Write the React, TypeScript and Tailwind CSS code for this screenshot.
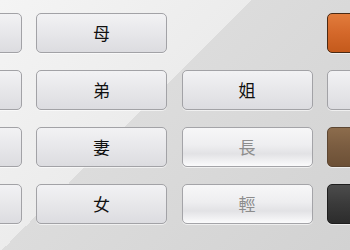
import React from 'react';

type Cell =
  | { kind: 'plain'; label?: string }
  | { kind: 'gloss'; label: string }
  | { kind: 'swatch'; tone: 'orange' | 'brown' | 'dark' }
  | { kind: 'empty' };

const rows: Cell[][] = [
  [{ kind: 'plain' }, { kind: 'plain', label: '母' }, { kind: 'empty' }, { kind: 'swatch', tone: 'orange' }],
  [{ kind: 'plain' }, { kind: 'plain', label: '弟' }, { kind: 'plain', label: '姐' }, { kind: 'plain' }],
  [{ kind: 'plain' }, { kind: 'plain', label: '妻' }, { kind: 'gloss', label: '長' }, { kind: 'swatch', tone: 'brown' }],
  [{ kind: 'plain' }, { kind: 'plain', label: '女' }, { kind: 'gloss', label: '輕' }, { kind: 'swatch', tone: 'dark' }],
];

const swatchClass = {
  orange:
    'border-[#4a2a14] bg-[linear-gradient(180deg,#e27c3c_0%,#d4682a_50%,#c45a1c_100%)]',
  brown:
    'border-[#5c4632] bg-[linear-gradient(180deg,#8c6c4c_0%,#7a5c40_50%,#6c5036_100%)]',
  dark: 'border-[#1e1e1e] bg-[linear-gradient(180deg,#4c4c4c_0%,#3a3a3a_50%,#2c2c2c_100%)]',
};

function Key({ cell }: { cell: Cell }) {
  if (cell.kind === 'empty') return <div />;

  if (cell.kind === 'swatch') {
    return (
      <div
        className={`h-[40px] rounded-[5px] border shadow-[0_1px_0_rgba(255,255,255,0.6)] ${swatchClass[cell.tone]}`}
      />
    );
  }

  if (cell.kind === 'gloss') {
    return (
      <button
        type="button"
        className="flex h-[40px] items-center justify-center rounded-[5px] border border-[#a4a4a8] bg-[linear-gradient(180deg,#f7f7f8_0%,#eeeef0_45%,#e2e2e5_68%,#fbfbfc_100%)] text-[17px] text-[#8c8c8c] shadow-[0_1px_0_rgba(255,255,255,0.6)]"
      >
        {cell.label}
      </button>
    );
  }

  return (
    <button
      type="button"
      className="flex h-[40px] items-center justify-center rounded-[5px] border border-[#a2a2a6] bg-[linear-gradient(180deg,#f2f2f4_0%,#e6e6e9_55%,#dcdce0_100%)] text-[17px] text-[#111] shadow-[0_1px_0_rgba(255,255,255,0.6)]"
    >
      {cell.label}
    </button>
  );
}

export default function App() {
  return (
    <div
      className="h-[250px] w-[350px] overflow-hidden bg-[linear-gradient(135deg,#f4f4f4_0%,#ececec_42%,#dcdcdc_42%,#d2d2d2_100%)]"
      style={{ fontFamily: '"Noto Sans CJK TC", "Noto Sans", sans-serif' }}
    >
      <div className="ml-[-109.5px] grid w-max grid-cols-[repeat(4,131px)] gap-x-[14.5px] gap-y-[17px] pt-[13px]">
        {rows.map((row, r) =>
          row.map((cell, c) => <Key key={`${r}-${c}`} cell={cell} />),
        )}
      </div>
    </div>
  );
}
